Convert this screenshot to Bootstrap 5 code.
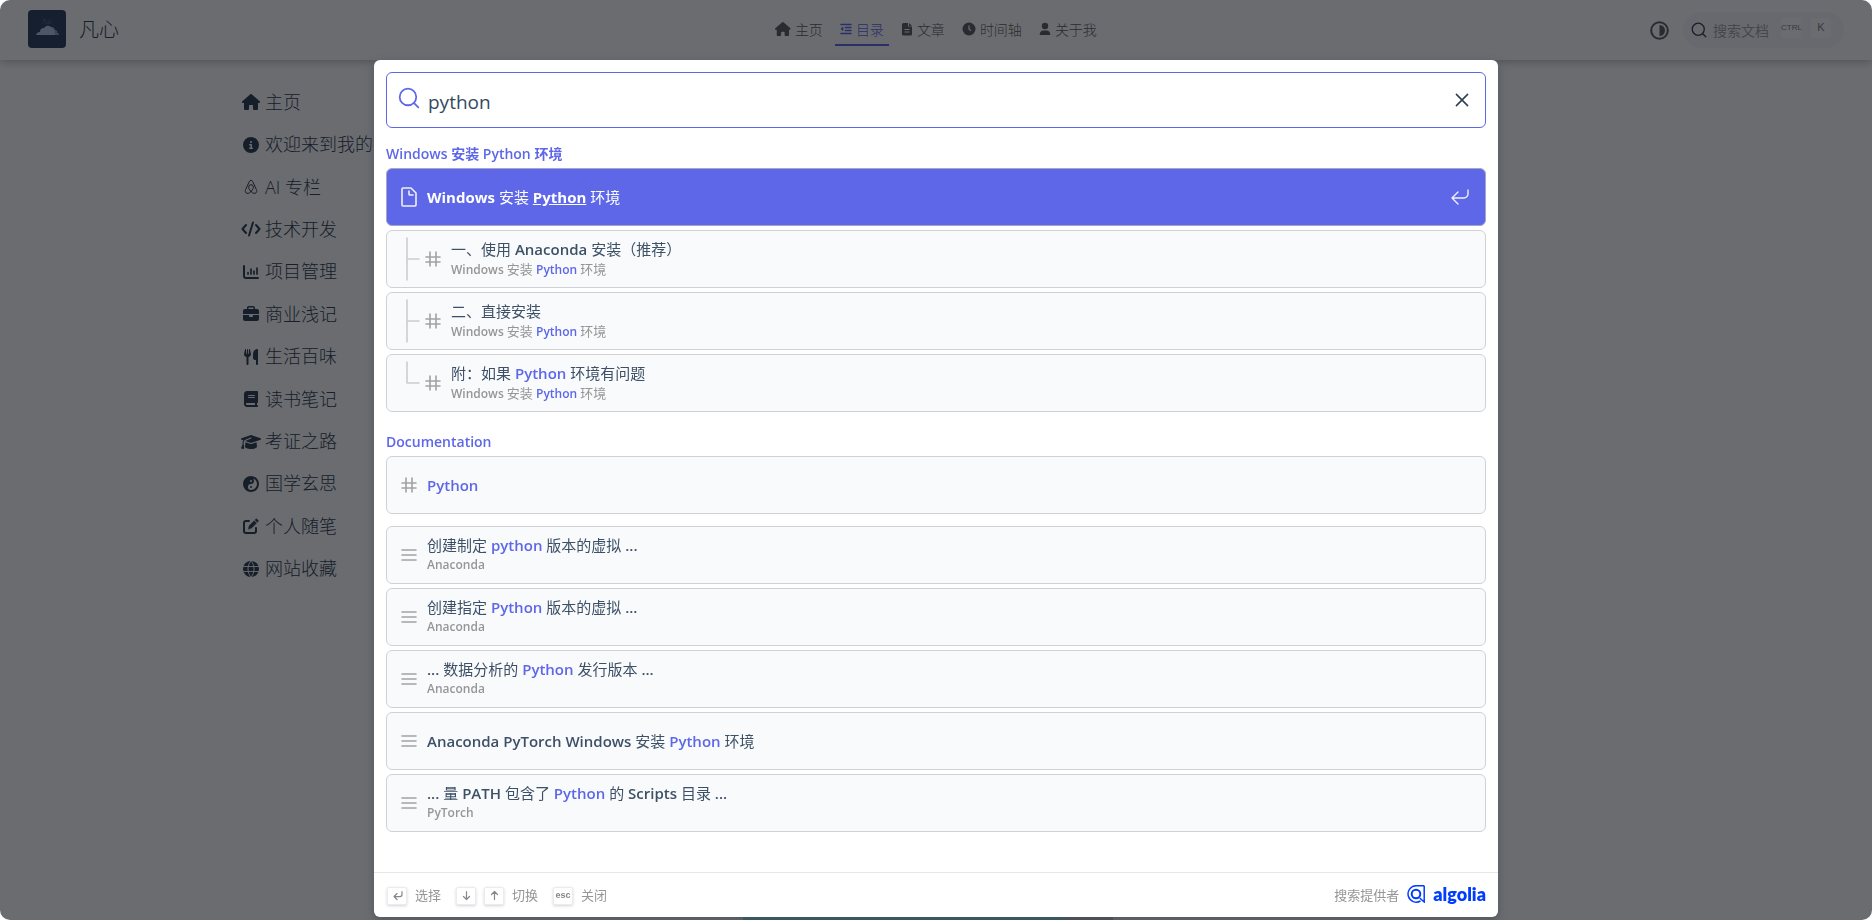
<!DOCTYPE html>
<html lang="zh-CN">
<head>
<meta charset="utf-8">
<meta name="viewport" content="width=device-width, initial-scale=1">
<title>凡心</title>
<link href="https://cdn.jsdelivr.net/npm/bootstrap@5.3.0/dist/css/bootstrap.min.css" rel="stylesheet">
<style>
  :root {
    --accent: #5d67e8;
    --ink: #2c3e50;
    --muted-ink: #969696;
  }
  body {
    font-family: "Open Sans", "Noto Sans CJK SC", sans-serif;
    color: var(--ink);
    background: #fff;
  }
  a { color: inherit; text-decoration: none; }
  .fa-i { height: 1em; width: auto; fill: currentColor; flex: none; }
  .line-i { fill: none; stroke: currentColor; stroke-linecap: round; stroke-linejoin: round; flex: none; }

  /* page behind the dialog */
  .site { height: 100vh; border-radius: 10px; }
  .site-header {
    display: grid;
    grid-template-columns: 1fr auto 1fr;
    height: 60px;
    padding: 0 28px;
    box-shadow: 0 2px 8px rgba(0, 0, 0, .25);
  }
  .brand { font-size: 20px; font-weight: 300; gap: 13px; }
  .brand-logo { width: 38px; height: 38px; margin-bottom: 2px; }
  .top-nav { gap: 7px; font-size: 14px; font-weight: 300; color: #5a5c62; }
  .top-nav a { padding: 4px 5px; gap: 4px; height: 32px; border-bottom: 2px solid transparent; }
  .top-nav a.active { color: var(--accent); border-color: var(--accent); }
  .theme-btn { color: #5a5c62; margin-right: 14px; }
  .search-btn {
    width: 161px; height: 36px; padding: 0 13px 0 8px; gap: 6px;
    border-radius: 18px; background: #f8f8fa; font-size: 14px; color: #a0a3aa;
  }
  .key-cap {
    width: 20px; height: 20px; border-radius: 3px; background: #fff;
    font-family: "Liberation Sans", sans-serif; font-size: 8px; line-height: 19px; color: #80838a;
  }
  .key-cap.k { font-size: 11px; }
  .side-menu {
    display: grid; grid-auto-rows: 1fr;
    height: 509px; width: 400px;
    margin: 21px 0 0 241px;
    font-size: 18px; font-weight: 300;
  }
  .side-menu a { gap: 4px; white-space: nowrap; }
  .side-menu .ic { width: 20px; font-size: 16px; }
  .next-card { width: 386px; height: 3px; padding-right: 16px; }
  .next-card .art { background: #70e0e0; flex: 320; }
  .next-card .cap { background: #c4c4c8; flex: 50; }

  /* search dialog */
  .veil { position: fixed; inset: 0; background: rgba(9, 10, 17, .6); border-radius: 10px; }
  .search-dialog {
    max-width: 1124px;
    height: calc(100vh - 63px);
    margin: 60px auto 0;
    background: #fff;
    border-radius: 6px;
    box-shadow: 0 3px 8px rgba(70, 75, 88, .7);
  }
  .search-box {
    height: 56px; margin: 12px 12px 0; padding: 0 12px 0 11px;
    border: 1px solid var(--accent); border-radius: 6px;
  }
  .search-box input { font-size: 19px; color: #34495e; margin-left: 8px; outline: 0; }
  .search-box .glass-label { color: var(--accent); }
  .results { padding: 0 12px; }
  .group-title { font-size: 14px; font-weight: 600; line-height: 20px; color: var(--accent); margin: 16px 0 4px; }
  .hits { display: grid; gap: 4px; }
  .hit {
    height: 58px; padding: 0 12px;
    border: 1px solid #d0d1d4; border-radius: 6px;
    background: #f9fafc; color: #3d5066;
  }
  .hit .t { font-size: 15px; line-height: 20px; font-weight: 600; }
  .hit .s { font-size: 12px; line-height: 20px; font-weight: 600; color: var(--muted-ink); }
  .hit .s .zh { font-size: 13px; }
  .hit .zh { font-weight: 400; }
  .hit .line-i { color: #a0a2a4; }
  .hit .tree { opacity: .5; }
  .hit .txt { margin-left: 8px; }
  .hl { color: var(--accent); }
  .hit.sel { background: #5d67e8; color: #fff; border-color: #a3a6c9; padding-right: 15px; }
  .hit.sel .t { font-weight: 700; }
  .hit.sel .line-i { color: #fff; opacity: .9; }
  .hit.sel .hl { color: #fff; text-decoration: underline; }
  .dialog-footer { height: 45px; padding: 1px 12px 0 13px; border-top: 1px solid #e6e7ea; font-size: 13px; color: var(--muted-ink); }
  .cmd {
    width: 20px; height: 18px; border: 1px solid #ececef; border-radius: 2px;
    box-shadow: 0 1px 3px rgba(60, 60, 80, .22); color: #85878c; background: #fff;
    font-family: "Liberation Sans", sans-serif; font-size: 9px; line-height: 14px; padding: 0;
  }
  .keys { gap: 15px; }
  .keys li { gap: 8px; }
  .algolia { color: #003dff; font-family: Lato, sans-serif; font-size: 18px; font-weight: 800; line-height: 20px; padding-bottom: 3px; }
</style>
</head>
<body>

<svg class="d-none" aria-hidden="true">
  <symbol id="house" viewBox="0 0 576 512"><path d="M575.8 255.5c0 18-15 32.1-32 32.1h-32l.7 160.2c0 2.7-.2 5.4-.5 8.1V472c0 22.1-17.9 40-40 40H392c-22.1 0-40-17.9-40-40V384c0-17.7-14.3-32-32-32H256c-17.7 0-32 14.3-32 32v88c0 22.1-17.9 40-40 40H104c-22.1 0-40-17.9-40-40V287.6H32c-18 0-32-14-32-32.1c0-9 3-17 10-24L266.4 8c7-7 15-8 22-8s15 2 21 7L564.8 231.5c8 7 12 15 11 24z"/></symbol>
  <symbol id="hash" viewBox="0 0 20 20"><path d="M13 13h4-4V8H7v5h6v4-4H7V8H3h4V3v5h6V3v5h4-4v5zm-6 0v4-4H3h4z"/></symbol>
  <symbol id="lines" viewBox="0 0 20 20"><path d="M17 5H3h14zm0 5H3h14zm0 5H3h14z"/></symbol>
  <symbol id="glass" viewBox="0 0 20 20"><path d="M14.386 14.386l4.0877 4.0877-4.0877-4.0877c-2.9418 2.9419-7.7115 2.9419-10.6533 0-2.9419-2.9418-2.9419-7.7115 0-10.6533 2.9418-2.9419 7.7115-2.9419 10.6533 0 2.9419 2.9418 2.9419 7.7115 0 10.6533z"/></symbol>
</svg>

<div class="site d-flex flex-column overflow-hidden">
  <header class="site-header align-items-center">
    <a class="brand d-flex align-items-center" href="#">
      <svg class="brand-logo" viewBox="0 0 38 38" aria-hidden="true">
        <rect width="38" height="38" rx="4" fill="#2c4060"/>
        <text x="19" y="13" font-size="5" text-anchor="middle" fill="#8a96b4">凡心</text>
        <path d="M8 25q1-3 4-3 0-4 4-4 3-4 7-1 3 0 4 3 3 1 2 3 2 0 2 2z" fill="#bac6e6"/>
        <path d="M23 17q3 0 4 3 3 1 2 3 2 0 2 2h-4q0-6-4-8z" fill="#8f9cc4"/>
      </svg>
      <span>凡心</span>
    </a>
    <nav class="top-nav d-flex">
      <a class="d-flex align-items-center" href="#"><svg class="fa-i" viewBox="0 0 576 512"><use href="#house"/></svg>主页</a>
      <a class="d-flex align-items-center active" href="#"><svg class="line-i" width="12" height="12" viewBox="0 0 12 12" stroke-width="1.5"><path d="M1 1.5h10M5.5 4.5H11M5.5 7.5H11M1 10.5h10"/><path d="M3 4.5v3L1.2 6z" fill="currentColor" stroke-width=".8"/></svg>目录</a>
      <a class="d-flex align-items-center" href="#"><svg width="12" height="14" viewBox="0 0 12 14" fill="currentColor"><path fill-rule="evenodd" d="M2.5 1H7v3.5h4V12a1.5 1.5 0 0 1-1.500 1.500h-7A1.5 1.5 0 0 1 1 12V2.500A1.5 1.5 0 0 1 2.5 1zM3.5 7v1h5V7zm0 2.500v1h5v-1z"/><path d="M8 1l3 3H8z"/></svg>文章</a>
      <a class="d-flex align-items-center" href="#"><svg width="14" height="14" viewBox="0 0 14 14"><circle cx="7" cy="7" r="6.5" fill="currentColor"/><path d="M7 3.500V7l2 1.800" fill="none" stroke="#fff" stroke-width="1.2"/></svg>时间轴</a>
      <a class="d-flex align-items-center" href="#"><svg width="12" height="14" viewBox="0 0 12 14" fill="currentColor"><circle cx="6" cy="4" r="3.2"/><path d="M.7 13q0-4.500 4-4.500h2.600q4 0 4 4.500z"/></svg>关于我</a>
    </nav>
    <div class="d-flex align-items-center justify-content-end">
      <button class="theme-btn btn p-0 border-0 d-flex" type="button" aria-label="主题"><svg width="19" height="19" viewBox="0 0 19 19"><circle cx="9.5" cy="9.5" r="8.3" fill="none" stroke="currentColor" stroke-width="2"/><path d="M9.5 4a5.5 5.5 0 0 1 0 11z" fill="currentColor"/></svg></button>
      <button class="search-btn btn border-0 d-flex align-items-center" type="button">
        <svg class="line-i" width="16" height="16" stroke="#2c3e50" stroke-width="1.6"><use href="#glass" color="#2c3e50"/></svg>
        <span class="me-auto">搜索文档</span>
        <kbd class="key-cap p-0 mb-1">CTRL</kbd><kbd class="key-cap k p-0 ms-1 mb-1">K</kbd>
      </button>
    </div>
  </header>

  <ul class="side-menu list-unstyled">
    <li><a class="d-flex align-items-center h-100" href="#"><span class="ic d-flex justify-content-center"><svg class="fa-i" viewBox="0 0 576 512"><use href="#house"/></svg></span>主页</a></li>
    <li><a class="d-flex align-items-center h-100" href="#"><span class="ic d-flex justify-content-center"><svg class="fa-i" viewBox="0 0 512 512"><path fill-rule="evenodd" d="M256 512A256 256 0 1 0 256 0a256 256 0 1 0 0 512zM216 336h24V272H216c-13.300 0-24-10.700-24-24s10.700-24 24-24h48c13.300 0 24 10.700 24 24v88h8c13.300 0 24 10.700 24 24s-10.700 24-24 24H216c-13.300 0-24-10.700-24-24s10.700-24 24-24zm40-208a32 32 0 1 1 0 64 32 32 0 1 1 0-64z"/></svg></span>欢迎来到我的博客</a></li>
    <li><a class="d-flex align-items-center h-100" href="#"><span class="ic d-flex justify-content-center"><svg class="line-i" width="16" height="16" viewBox="0 0 16 16" stroke-width="1"><path d="M8 12.500C6 10.300 5.500 9 5.700 8a2.300 2.300 0 0 1 4.600 0c.2 1-.3 2.300-2.300 4.500-2 2.200-4 2.300-5 1.300-1-.9-.9-2-.4-3.200L6.300 2.500q1.700-3 3.400 0l3.700 8.100c.5 1.200.6 2.300-.4 3.200-1 1-3 .9-5-1.300z"/></svg></span>AI 专栏</a></li>
    <li><a class="d-flex align-items-center h-100" href="#"><span class="ic d-flex justify-content-center"><svg class="line-i" width="20" height="16" viewBox="0 0 20 16" stroke-width="2"><path d="M5 4L1.500 8 5 12M15 4l3.500 4L15 12M12 1.500L8 14.500"/></svg></span>技术开发</a></li>
    <li><a class="d-flex align-items-center h-100" href="#"><span class="ic d-flex justify-content-center"><svg class="line-i" width="16" height="16" viewBox="0 0 16 16" stroke-width="2"><path d="M1 2v10q0 2 2 2h12"/><path d="M5 8.500V10M8 5v5M11 7v3M14 4v6" stroke-width="1.7"/></svg></span>项目管理</a></li>
    <li><a class="d-flex align-items-center h-100" href="#"><span class="ic d-flex justify-content-center"><svg class="fa-i" viewBox="0 0 512 512"><path d="M184 48H328c4.400 0 8 3.600 8 8V96H176V56c0-4.400 3.600-8 8-8zm-56 8V96H64C28.700 96 0 124.700 0 160v96H512V160c0-35.300-28.700-64-64-64H384V56c0-30.900-25.100-56-56-56H184c-30.900 0-56 25.100-56 56zM512 288H320v32c0 17.700-14.300 32-32 32H224c-17.700 0-32-14.300-32-32V288H0V416c0 35.300 28.700 64 64 64H448c35.300 0 64-28.700 64-64V288z"/></svg></span>商业浅记</a></li>
    <li><a class="d-flex align-items-center h-100" href="#"><span class="ic d-flex justify-content-center"><svg class="fa-i" viewBox="0 0 448 512"><path d="M416 0C400 0 288 32 288 176V288c0 35.300 28.700 64 64 64h32V480c0 17.700 14.300 32 32 32s32-14.300 32-32V32c0-17.700-14.300-32-32-32zM64 16C64 7.800 57.900 1 49.700 .1S34.200 4.600 32.400 12.500L2.100 148.800C.7 155.100 0 161.500 0 167.900c0 45.900 35.100 83.600 80 87.700V480c0 17.700 14.300 32 32 32s32-14.300 32-32V255.600c44.900-4.100 80-41.800 80-87.700c0-6.400-.7-12.800-2.100-19.100L191.600 12.500c-1.800-8-9.300-13.300-17.400-12.400S160 7.800 160 16V150.200c0 5.400-4.400 9.800-9.800 9.800c-5.100 0-9.300-3.900-9.800-9L127.900 14.600C127.200 6.300 120.300 0 112 0s-15.200 6.300-15.900 14.600L83.700 151c-.5 5.100-4.700 9-9.800 9c-5.400 0-9.800-4.400-9.800-9.800V16z"/></svg></span>生活百味</a></li>
    <li><a class="d-flex align-items-center h-100" href="#"><span class="ic d-flex justify-content-center"><svg class="fa-i" viewBox="0 0 448 512"><path fill-rule="evenodd" d="M96 0C43 0 0 43 0 96V416c0 53 43 96 96 96H416c17.700 0 32-14.300 32-32s-14.300-32-32-32V384c17.700 0 32-14.300 32-32V32c0-17.700-14.300-32-32-32H96zm0 384H352v64H96c-17.700 0-32-14.300-32-32s14.300-32 32-32zm32-240c0-8.800 7.200-16 16-16H336c8.800 0 16 7.200 16 16s-7.200 16-16 16H144c-8.800 0-16-7.200-16-16zm16 48H336c8.800 0 16 7.200 16 16s-7.200 16-16 16H144c-8.800 0-16-7.200-16-16s7.200-16 16-16z"/></svg></span>读书笔记</a></li>
    <li><a class="d-flex align-items-center h-100" href="#"><span class="ic d-flex justify-content-center"><svg class="fa-i" viewBox="0 0 640 512"><path d="M320 32c-8.100 0-16.100 1.400-23.700 4.100L15.800 137.400C6.300 140.900 0 149.900 0 160s6.300 19.100 15.800 22.600l57.900 20.900C57.300 229.300 48 259.800 48 291.900v28.100c0 28.400-10.800 57.700-22.300 80.800c-6.500 13-13.900 25.800-22.500 37.600C0 442.700-.9 448.300 .9 453.400s6 8.900 11.200 10.200l64 16c4.200 1.100 8.700 .3 12.400-2s6.300-6.100 7.100-10.400c8.600-42.800 4.300-81.200-2.100-108.700C90.300 344.300 86 329.800 80 316.500V291.900c0-30.200 10.200-58.700 27.900-81.500c12.900-15.500 29.600-28 49.200-35.700l157-61.700c8.200-3.200 17.500 .8 20.700 9s-.8 17.500-9 20.700l-157 61.700c-12.400 4.900-23.300 12.400-32.200 21.600l159.600 57.600c7.600 2.700 15.600 4.100 23.700 4.100s16.100-1.400 23.700-4.100L624.200 182.600c9.500-3.400 15.800-12.500 15.800-22.600s-6.300-19.100-15.800-22.600L343.700 36.100C336.100 33.400 328.100 32 320 32zM128 408c0 35.300 86 72 192 72s192-36.700 192-72L496.700 262.600 354.500 314c-11.100 4-22.800 6-34.500 6s-23.500-2-34.500-6L143.300 262.600 128 408z"/></svg></span>考证之路</a></li>
    <li><a class="d-flex align-items-center h-100" href="#"><span class="ic d-flex justify-content-center"><svg class="fa-i" viewBox="0 0 16 16"><path fill-rule="evenodd" d="M8 0a8 8 0 1 0 0 16A8 8 0 0 0 8 0zM8 14a3 3 0 0 1 0-6 3 3 0 0 0 0-6 6 6 0 0 1 0 12zM8 10a1 1 0 1 0 0 2 1 1 0 0 0 0-2z"/><circle cx="8" cy="5" r="1" fill="#fff"/></svg></span>国学玄思</a></li>
    <li><a class="d-flex align-items-center h-100" href="#"><span class="ic d-flex justify-content-center"><svg class="line-i" width="16" height="16" viewBox="0 0 16 16" stroke-width="2"><path d="M6 3H3Q1 3 1 5v8q0 2 2 2h8q2 0 2-2v-3"/><path d="M5.500 10.800l.7-3L11 3l2.300 2.300-4.800 4.800zM12 2l.8-.8q.6-.6 1.200 0l1 1q.6.6 0 1.200l-.8.8z" fill="currentColor" stroke-width=".6"/></svg></span>个人随笔</a></li>
    <li><a class="d-flex align-items-center h-100" href="#"><span class="ic d-flex justify-content-center"><svg class="fa-i" viewBox="0 0 16 16"><circle cx="8" cy="8" r="8"/><path d="M0 5.500h16M0 10.500h16M8 0c-4 4-4 12 0 16M8 0c4 4 4 12 0 16" fill="none" stroke="#fff" stroke-width=".9"/></svg></span>网站收藏</a></li>
  </ul>
  <div class="next-card d-flex mt-auto mx-auto"><div class="art"></div><div class="cap"></div></div>
</div>

<div class="veil">
  <div class="search-dialog d-flex flex-column" role="dialog" aria-label="搜索">
    <form class="search-box d-flex align-items-center">
      <label for="q" class="glass-label d-flex pb-1"><svg class="line-i" width="22" height="22" stroke-width="1.6" aria-label="搜索"><use href="#glass"/></svg></label>
      <input id="q" class="border-0 p-0 pt-1 flex-grow-1" type="text" value="python">
      <button class="btn p-0 border-0 d-flex" type="reset" aria-label="清除"><svg class="line-i" width="22" height="22" viewBox="0 0 20 20" color="#2c3e50" stroke-width="1.4"><path d="M15.090 4.910L4.910 15.090M4.910 4.910l10.180 10.180"/></svg></button>
    </form>

    <div class="results flex-grow-1 overflow-hidden">
      <h2 class="group-title">Windows 安装 Python 环境</h2>
      <div class="hits">
        <a class="hit sel d-flex align-items-center" href="#"><svg class="line-i" width="20" height="20" viewBox="0 0 20 20" stroke-width="1.6"><path d="M17 6v12c0 .52-.2 1-1 1H4c-.7 0-1-.33-1-1V2c0-.55.42-1 1-1h8l5 5zM14 8h-3.130c-.51 0-.87-.34-.87-.87V4"/></svg><div class="txt"><div class="t">Windows <span class="zh">安装</span> <span class="hl">Python</span> <span class="zh">环境</span></div></div><svg class="line-i ms-auto" width="20" height="20" viewBox="0 0 20 20" stroke-width="1.4"><path d="M18 3v4c0 2-2 4-4 4H2M8 17l-6-6 6-6"/></svg></a>
        <a class="hit d-flex align-items-center" href="#"><svg class="line-i tree" width="24" height="54" viewBox="0 0 24 54" stroke-width="1.6"><path d="M8 6v42M20 27H8.300"/></svg><svg class="line-i" width="20" height="20" stroke-width="1.6"><use href="#hash"/></svg><div class="txt"><div class="t"><span class="zh">一、使用</span> Anaconda <span class="zh">安装（推荐）</span></div><div class="s">Windows <span class="zh">安装</span> <span class="hl">Python</span> <span class="zh">环境</span></div></div></a>
        <a class="hit d-flex align-items-center" href="#"><svg class="line-i tree" width="24" height="54" viewBox="0 0 24 54" stroke-width="1.6"><path d="M8 6v42M20 27H8.300"/></svg><svg class="line-i" width="20" height="20" stroke-width="1.6"><use href="#hash"/></svg><div class="txt"><div class="t"><span class="zh">二、直接安装</span></div><div class="s">Windows <span class="zh">安装</span> <span class="hl">Python</span> <span class="zh">环境</span></div></div></a>
        <a class="hit d-flex align-items-center" href="#"><svg class="line-i tree" width="24" height="54" viewBox="0 0 24 54" stroke-width="1.6"><path d="M8 6v21M20 27H8.300"/></svg><svg class="line-i" width="20" height="20" stroke-width="1.6"><use href="#hash"/></svg><div class="txt"><div class="t"><span class="zh">附：如果</span> <span class="hl">Python</span> <span class="zh">环境有问题</span></div><div class="s">Windows <span class="zh">安装</span> <span class="hl">Python</span> <span class="zh">环境</span></div></div></a>
      </div>

      <h2 class="group-title mt-3 pt-1">Documentation</h2>
      <div class="hits">
        <a class="hit d-flex align-items-center mb-2" href="#"><svg class="line-i" width="20" height="20" stroke-width="1.6"><use href="#hash"/></svg><div class="txt"><div class="t"><span class="hl">Python</span></div></div></a>
        <a class="hit d-flex align-items-center" href="#"><svg class="line-i" width="20" height="20" stroke-width="1.6"><use href="#lines"/></svg><div class="txt"><div class="t"><span class="zh">创建制定</span> <span class="hl">python</span> <span class="zh">版本的虚拟</span> ...</div><div class="s">Anaconda</div></div></a>
        <a class="hit d-flex align-items-center" href="#"><svg class="line-i" width="20" height="20" stroke-width="1.6"><use href="#lines"/></svg><div class="txt"><div class="t"><span class="zh">创建指定</span> <span class="hl">Python</span> <span class="zh">版本的虚拟</span> ...</div><div class="s">Anaconda</div></div></a>
        <a class="hit d-flex align-items-center" href="#"><svg class="line-i" width="20" height="20" stroke-width="1.6"><use href="#lines"/></svg><div class="txt"><div class="t">... <span class="zh">数据分析的</span> <span class="hl">Python</span> <span class="zh">发行版本</span> ...</div><div class="s">Anaconda</div></div></a>
        <a class="hit d-flex align-items-center" href="#"><svg class="line-i" width="20" height="20" stroke-width="1.6"><use href="#lines"/></svg><div class="txt"><div class="t">Anaconda PyTorch Windows <span class="zh">安装</span> <span class="hl">Python</span> <span class="zh">环境</span></div></div></a>
        <a class="hit d-flex align-items-center" href="#"><svg class="line-i" width="20" height="20" stroke-width="1.6"><use href="#lines"/></svg><div class="txt"><div class="t">... <span class="zh">量</span> PATH <span class="zh">包含了</span> <span class="hl">Python</span> <span class="zh">的</span> Scripts <span class="zh">目录</span> ...</div><div class="s">PyTorch</div></div></a>
      </div>
    </div>

    <footer class="dialog-footer d-flex align-items-center">
      <ul class="keys list-unstyled d-flex mb-0">
        <li class="d-flex align-items-center"><kbd class="cmd"><svg class="line-i d-block mx-auto" width="15" height="15" stroke-width="1.2"><path d="M12 3.530v3c0 1-1 2-2 2H4M7 11.530l-3-3 3-3"/></svg></kbd>选择</li>
        <li class="d-flex align-items-center"><kbd class="cmd"><svg class="line-i d-block mx-auto" width="15" height="15" stroke-width="1.2"><path d="M7.500 3.500v8M10.500 8.500l-3 3-3-3"/></svg></kbd><kbd class="cmd"><svg class="line-i d-block mx-auto" width="15" height="15" stroke-width="1.2"><path d="M7.500 11.500v-8M10.500 6.500l-3-3-3 3"/></svg></kbd>切换</li>
        <li class="d-flex align-items-center"><kbd class="cmd text-center fw-bold">esc</kbd>关闭</li>
      </ul>
      <a class="d-flex align-items-center ms-auto gap-2" href="#">搜索提供者
        <svg class="mb-1" width="18" height="18" viewBox="0 0 18 18" fill="none" stroke="#003dff" stroke-width="1.5" aria-hidden="true"><path d="M17.200.8V17l-4.500-4M17.200.8H9A8.200 8.200 0 1 0 13.500 16"/><circle cx="9" cy="9" r="4.3" stroke-width="2"/></svg>
        <span class="algolia">algolia</span></a>
    </footer>
  </div>
</div>

<script src="https://cdn.jsdelivr.net/npm/bootstrap@5.3.0/dist/js/bootstrap.bundle.min.js"></script>
</body>
</html>
